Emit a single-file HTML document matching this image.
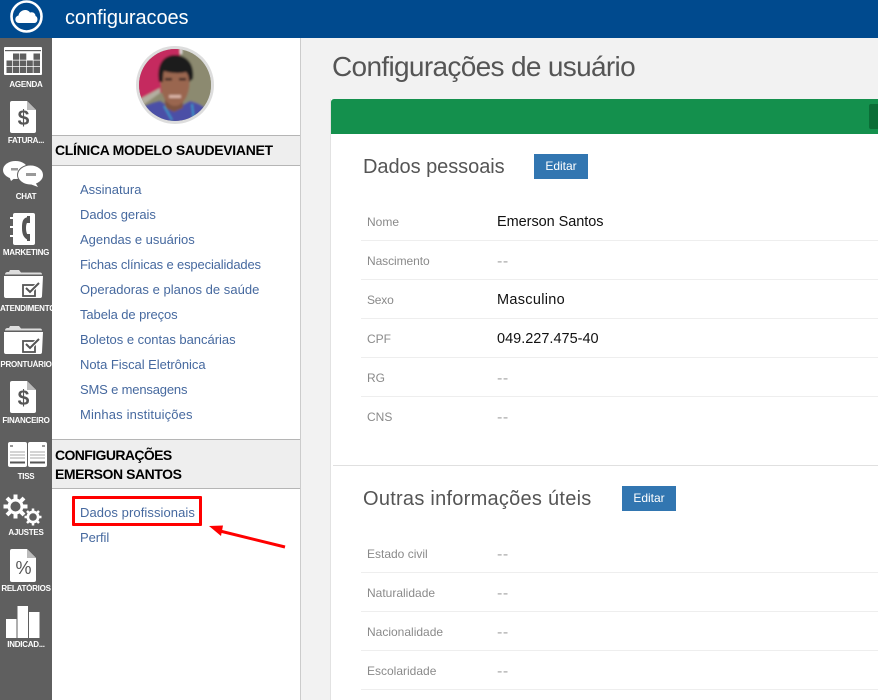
<!DOCTYPE html>
<html lang="pt">
<head>
<meta charset="utf-8">
<title>Configurações de usuário</title>
<style>
html,body{margin:0;padding:0}
body{width:878px;height:700px;overflow:hidden;position:relative;background:#f2f2f2;font-family:"Liberation Sans",sans-serif}
.a{position:absolute;white-space:nowrap}
#top{left:0;top:0;width:878px;height:38px;background:#004a8e}
#side{left:0;top:38px;width:52px;height:662px;background:#5f5f5f}
#panel{left:52px;top:38px;width:248px;height:662px;background:#fff;border-right:1px solid #ccc}
.band{left:52px;width:248px;background:#eee;border-top:1px solid #b5b5b5;border-bottom:1px solid #b5b5b5}
.bt{left:55px;font-weight:bold;font-size:14px;color:#000}
.lnk{left:80px;font-size:13px;color:#46699f;line-height:16px}
.lab{left:367px;font-size:12px;color:#8a8a8a;line-height:14px}
.val{left:497px;font-size:14.5px;color:#111;line-height:18px}
.nil{left:497px;font-size:16px;color:#aaa;line-height:16px;letter-spacing:.6px;margin-top:1.5px}
.sep{left:361px;width:517px;height:1px;background:#eee}
.btn{background:#3276b1;color:#fff;font-size:12px;text-align:center;width:54px;height:25px;line-height:25px}
.h2{font-size:20px;color:#555;line-height:26px}
.ic{left:0;width:52px;text-align:center;color:#fff;font-size:8px;line-height:10px;overflow:hidden;font-weight:bold;letter-spacing:-.25px}
svg{position:absolute;overflow:visible}
</style>
</head>
<body>
<div class="a" id="top"></div>
<svg style="left:10px;top:0" width="34" height="34" viewBox="0 0 34 34">
<circle cx="16.500" cy="16.500" r="15" fill="none" stroke="#fff" stroke-width="2.600"/>
<path d="M9 23c-4.500 0-5-6.500-.5-7.500C9.500 10 17 8 20 12.500c3-1 5.500 1 5.500 3.500 3 1 2.500 7-1 7z" fill="#fff"/>
</svg>
<div class="a" style="left:65px;top:6px;font-size:20px;line-height:24px;color:#fff;letter-spacing:-.08px">configuracoes</div>

<div class="a" id="side"></div>
<div class="a" id="panel"></div>

<!-- sidebar icons -->
<svg style="left:0;top:0" width="52" height="700" viewBox="0 0 52 700">
<!-- agenda -->
<rect x="4" y="47" width="38" height="28" rx="1" fill="#fff"/>
<rect x="5" y="50" width="36" height="1.200" fill="#5f5f5f"/>
<path fill="#5f5f5f" d="M13 53.500h6.300v6.200H13zM20 53.500h6.300v6.200H20zM33.500 53.500h6.500v6.200h-6.500zM6.500 60.500h5.800v5.700H6.500zM13 60.500h6.300v5.700H13zM20 60.500h6.300v5.700H20zM27 60.500h5.800v5.700H27zM33.500 60.500h6.500v5.700h-6.500zM6.500 67h5.800v6H6.500zM13 67h6.300v6H13zM20 67h6.300v6H20zM27 67h5.800v6H27zM33.500 67h6.500v6h-6.500z"/>
<!-- fatura -->
<path d="M12 101h15l9 9v21q0 2-2 2H12q-2 0-2-2v-28q0-2 2-2z" fill="#fff"/>
<path d="M27 101v9h9z" fill="#bbb"/>
<text x="23.500" y="125" text-anchor="middle" font-family="Liberation Sans" font-weight="bold" font-size="21" fill="#555">$</text>
<!-- chat -->
<ellipse cx="15.500" cy="170" rx="12.500" ry="9" fill="#fff"/>
<path d="M9 176l2 5 5-4z" fill="#fff"/>
<rect x="11" y="168" width="7" height="2.500" fill="#999"/>
<ellipse cx="30.500" cy="175" rx="13" ry="10" stroke="#5f5f5f" stroke-width="1" fill="#fff"/>
<path d="M35 182l3 5-8-3z" fill="#fff"/>
<rect x="26" y="173" width="10" height="3" fill="#999"/>
<!-- marketing -->
<rect x="13" y="213" width="22" height="32" rx="2" fill="#fff"/>
<path d="M10 218h5M10 227h5M10 236h5" stroke="#fff" stroke-width="2"/>
<path d="M28 217c-5 1-6 4-6 11s2 10 6 12l1-4c-2-1-3-4-3-8s1-6 3-7z" fill="#555"/>
<rect x="27" y="216" width="3" height="7" fill="#555"/>
<rect x="27" y="234" width="3" height="7" fill="#555"/>
<!-- folders -->
<g>
<path d="M9 272l1-2h9l2 2.500h19q2 0 2 2H5q0-2 2-2.500z" fill="#ddd"/>
<path d="M4 276h39l-1 20q0 2-2 2H6q-2 0-2-2z" fill="#fff"/>
<rect x="23" y="285" width="12" height="11" fill="none" stroke="#555" stroke-width="1.800"/>
<path d="M26 288l4 4 9-9" fill="none" stroke="#fff" stroke-width="4"/>
<path d="M26 288l4 4 9-9" fill="none" stroke="#555" stroke-width="2"/>
</g>
<g transform="translate(0,56)">
<path d="M9 272l1-2h9l2 2.500h19q2 0 2 2H5q0-2 2-2.500z" fill="#ddd"/>
<path d="M4 276h39l-1 20q0 2-2 2H6q-2 0-2-2z" fill="#fff"/>
<rect x="23" y="285" width="12" height="11" fill="none" stroke="#555" stroke-width="1.800"/>
<path d="M26 288l4 4 9-9" fill="none" stroke="#fff" stroke-width="4"/>
<path d="M26 288l4 4 9-9" fill="none" stroke="#555" stroke-width="2"/>
</g>
<!-- financeiro -->
<path d="M12 381h15l9 9v21q0 2-2 2H12q-2 0-2-2v-28q0-2 2-2z" fill="#fff"/>
<path d="M27 381v9h9z" fill="#bbb"/>
<text x="23.500" y="405" text-anchor="middle" font-family="Liberation Sans" font-weight="bold" font-size="21" fill="#555">$</text>
<!-- tiss -->
<rect x="8" y="442" width="19" height="25" rx="2" fill="#fff"/>
<rect x="28" y="442" width="19" height="25" rx="2" fill="#fff"/>
<path d="M10 452h15M10 455h15M10 458h15M30 452h15M30 455h15M30 458h15" stroke="#aaa" stroke-width="1"/>
<path d="M10 462.500h15M30 462.500h15" stroke="#555" stroke-width="2"/>
<path d="M10 446h3M42 446h3" stroke="#777" stroke-width="1.500"/>
<!-- ajustes -->
<circle cx="15.500" cy="506.500" r="8" fill="#fff"/>
<path d="M15.500 494.500v24M3.500 506.500h24M7 498l17 17M24 498l-17 17" stroke="#fff" stroke-width="4"/>
<circle cx="15.500" cy="506.500" r="5" fill="#5f5f5f"/>
<circle cx="33" cy="517" r="6.500" fill="#fff"/>
<path d="M33 508.500v17M24.500 517h17M27 511l12 12M39 511l-12 12" stroke="#fff" stroke-width="2.500"/>
<circle cx="33" cy="517" r="3.800" fill="#5f5f5f"/>
<!-- relatorios -->
<path d="M12 549h15l9 9v22q0 2-2 2H12q-2 0-2-2v-29q0-2 2-2z" fill="#fff"/>
<path d="M27 549v9h9z" fill="#bbb"/>
<text x="23.500" y="574" text-anchor="middle" font-family="Liberation Sans" font-size="18" fill="#555">%</text>
<!-- indicadores -->
<rect x="6" y="619" width="10.500" height="19" fill="#fff"/>
<rect x="17.500" y="606" width="10.500" height="32" fill="#fff"/>
<rect x="29" y="612" width="10.500" height="26" fill="#fff"/>
</svg>
<div class="a ic" style="top:80px">AGENDA</div>
<div class="a ic" style="top:136px">FATURA...</div>
<div class="a ic" style="top:192px">CHAT</div>
<div class="a ic" style="top:248px">MARKETING</div>
<div class="a ic" style="top:304px">ATENDIMENTO</div>
<div class="a ic" style="top:360px">PRONTUÁRIO</div>
<div class="a ic" style="top:416px">FINANCEIRO</div>
<div class="a ic" style="top:472px">TISS</div>
<div class="a ic" style="top:528px">AJUSTES</div>
<div class="a ic" style="top:584px">RELATÓRIOS</div>
<div class="a ic" style="top:640px">INDICAD...</div>

<!-- avatar -->
<svg style="left:136px;top:46px" width="78" height="78" viewBox="0 0 78 78">
<defs>
<clipPath id="c"><circle cx="39" cy="39" r="36"/></clipPath>
<filter id="b" x="-10%" y="-10%" width="120%" height="120%"><feGaussianBlur stdDeviation="1"/></filter>
</defs>
<circle cx="39" cy="39" r="39" fill="#ddd"/>
<circle cx="39" cy="39" r="36" fill="#8c8a70"/>
<g clip-path="url(#c)">
<g filter="url(#b)">
<rect x="44" y="-2" width="36" height="82" fill="#8c8a70"/>
<path d="M-2 -2H44V40L4 54H-2z" fill="#c52c5f"/>
<path d="M44 0h2v8h-2z" fill="#eee"/>
<path d="M2 54L24 42v5L6 60z" fill="#b3aea0"/>
<path d="M-2 80V66Q10 58 24 55L38 64 54 55Q68 58 80 72v8z" fill="#4b4fa6"/>
<path d="M29 50h18v12l-9 4-9-4z" fill="#7d523f"/>
<ellipse cx="39" cy="36" rx="14.500" ry="24" fill="#9a6650"/>
<path d="M23 36C20 18 28 9 39 9s20 8 18 24l-4 3c0-5-1-8-3-10-7 2-16 1-22-1-1 3-1 7-1 11z" fill="#1e1a1f"/>
<rect x="29" y="32" width="7" height="2.500" fill="#3a2722"/>
<rect x="43" y="32" width="7" height="2.500" fill="#3a2722"/>
<path d="M33 49h12v3H33z" fill="#d9b3a6"/>
<path d="M56 58l2 18M28 60l8 14" stroke="#35a0d0" stroke-width="1.500"/>
</g>
</g>
</svg>

<!-- bands -->
<div class="a band" style="top:135px;height:29px"></div>
<div class="a bt" style="top:142px;line-height:17px;letter-spacing:-.31px">CLÍNICA MODELO SAUDEVIANET</div>
<div class="a band" style="top:439px;height:48px"></div>
<div class="a bt" style="top:446px;line-height:19px;letter-spacing:-.6px">CONFIGURAÇÕES</div>
<div class="a bt" style="top:465px;line-height:19px;letter-spacing:-.45px">EMERSON SANTOS</div>

<div class="a lnk" style="top:182px">Assinatura</div>
<div class="a lnk" style="top:207px;letter-spacing:-.07px">Dados gerais</div>
<div class="a lnk" style="top:232px;letter-spacing:-.01px">Agendas e usuários</div>
<div class="a lnk" style="top:257px;letter-spacing:-.15px">Fichas clínicas e especialidades</div>
<div class="a lnk" style="top:282px;letter-spacing:.03px">Operadoras e planos de saúde</div>
<div class="a lnk" style="top:307px;letter-spacing:-.09px">Tabela de preços</div>
<div class="a lnk" style="top:332px;letter-spacing:-.02px">Boletos e contas bancárias</div>
<div class="a lnk" style="top:357px;letter-spacing:-.04px">Nota Fiscal Eletrônica</div>
<div class="a lnk" style="top:382px;letter-spacing:-.17px">SMS e mensagens</div>
<div class="a lnk" style="top:407px;letter-spacing:.15px">Minhas instituições</div>
<div class="a lnk" style="top:505px;letter-spacing:.08px">Dados profissionais</div>
<div class="a lnk" style="top:530px;letter-spacing:-.07px">Perfil</div>

<!-- annotation -->
<div class="a" style="left:72px;top:496px;width:124px;height:24px;border:3px solid #f00;border-radius:1px"></div>
<svg style="left:0;top:0" width="878" height="700" viewBox="0 0 878 700">
<path d="M285 547L220 531" stroke="#f00" stroke-width="3" fill="none"/>
<path d="M209 526L223 525.500L221 536z" fill="#f00"/>
</svg>

<!-- main -->
<div class="a" style="left:332px;top:49px;font-size:28px;line-height:36px;color:#555;letter-spacing:-.67px">Configurações de usuário</div>
<div class="a" style="left:331px;top:99px;width:547px;height:601px;background:#fff;box-shadow:-1px 0 0 #e2e2e2"></div>
<div class="a" style="left:331px;top:99px;width:547px;height:35px;background:#14904d;border-radius:3px 0 0 0"></div>
<div class="a" style="left:869px;top:104px;width:9px;height:25px;background:#0b6e37;border-radius:2px 0 0 2px"></div>

<div class="a h2" style="left:363px;top:154px;letter-spacing:-.05px">Dados pessoais</div>
<div class="a btn" style="left:534px;top:154px">Editar</div>

<div class="a lab" style="top:215px">Nome</div><div class="a val" style="top:213px;letter-spacing:-.05px">Emerson Santos</div>
<div class="a sep" style="top:240px"></div>
<div class="a lab" style="top:254px;letter-spacing:-.08px">Nascimento</div><div class="a nil" style="top:252px">--</div>
<div class="a sep" style="top:279px"></div>
<div class="a lab" style="top:293px;letter-spacing:-.2px">Sexo</div><div class="a val" style="top:291px;letter-spacing:.3px">Masculino</div>
<div class="a sep" style="top:318px"></div>
<div class="a lab" style="top:332px">CPF</div><div class="a val" style="top:330px">049.227.475-40</div>
<div class="a sep" style="top:357px"></div>
<div class="a lab" style="top:371px">RG</div><div class="a nil" style="top:369px">--</div>
<div class="a sep" style="top:396px"></div>
<div class="a lab" style="top:410px">CNS</div><div class="a nil" style="top:408px">--</div>

<div class="a" style="left:333px;top:465px;width:545px;height:1px;background:#e0e0e0"></div>

<div class="a h2" style="left:363px;top:486px;letter-spacing:.26px">Outras informações úteis</div>
<div class="a btn" style="left:622px;top:486px">Editar</div>

<div class="a lab" style="top:547px">Estado civil</div><div class="a nil" style="top:545px">--</div>
<div class="a sep" style="top:572px"></div>
<div class="a lab" style="top:586px">Naturalidade</div><div class="a nil" style="top:584px">--</div>
<div class="a sep" style="top:611px"></div>
<div class="a lab" style="top:625px">Nacionalidade</div><div class="a nil" style="top:623px">--</div>
<div class="a sep" style="top:650px"></div>
<div class="a lab" style="top:664px">Escolaridade</div><div class="a nil" style="top:662px">--</div>
<div class="a sep" style="top:689px"></div>
</body>
</html>
